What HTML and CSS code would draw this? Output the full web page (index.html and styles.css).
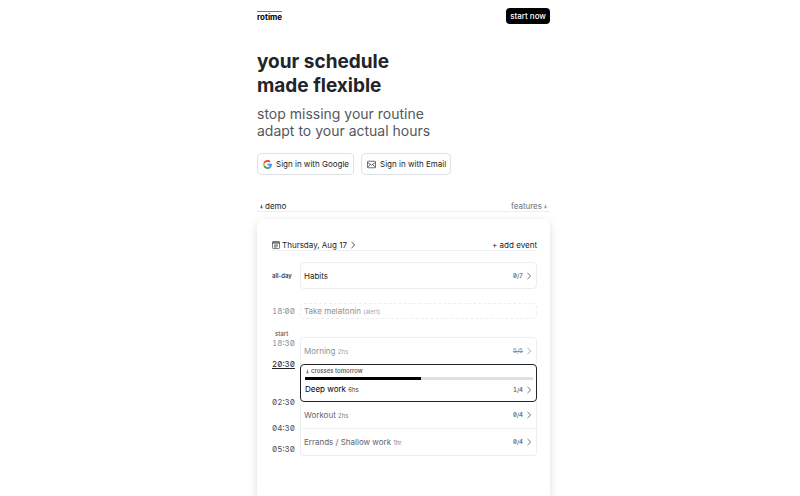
FILE: index.html
```
<!doctype html>
<html lang="en">
<head>
  <meta charset="UTF-8" />
  <title>rotime</title>
  <meta name="viewport" content="width=device-width, initial-scale=1">
  <link rel="stylesheet" href="styles.css">
</head>
<body>
  <svg class="defs" aria-hidden="true">
    <symbol id="chevron" viewBox="0 0 8 8">
      <path d="M2.5 1 5.7 4 2.5 7" fill="none" stroke="currentColor" stroke-width="0.8" />
    </symbol>
    <symbol id="arrow-down" viewBox="0 0 6 6">
      <path d="M3 .8V5M1.3 3.3 3 5 4.7 3.3" fill="none" stroke="currentColor" stroke-width="0.8" />
    </symbol>
  </svg>
  <div class="page">
    <header>
      <a class="logo" href="#">rotime</a>
      <button class="start">start now</button>
    </header>

    <section class="hero">
      <h1>your schedule<br>made flexible</h1>
      <p>stop missing your routine<br>adapt to your actual hours</p>
      <div class="signin">
        <button>
          <svg class="icon" viewBox="0 0 48 48">
            <path fill="#EA4335" d="M24 9.5c3.5 0 6.7 1.2 9.2 3.6l6.9-6.9C35.9 2.4 30.5 0 24 0 14.6 0 6.5 5.4 2.6 13.2l8 6.2C12.4 13.7 17.7 9.5 24 9.5z" />
            <path fill="#4285F4" d="M47 24.5c0-1.6-.2-3.1-.4-4.5H24v9h12.9c-.6 3-2.2 5.5-4.7 7.2l7.7 6C44.4 38 47 32 47 24.5z" />
            <path fill="#FBBC05" d="M10.5 28.6c-.5-1.5-.8-3-.8-4.6s.3-3.1.8-4.6l-8-6.2C.9 16.5 0 20.1 0 24s.9 7.5 2.6 10.8z" />
            <path fill="#34A853" d="M24 48c6.5 0 11.9-2.1 15.9-5.8l-7.7-6c-2.2 1.5-4.9 2.3-8.2 2.3-6.3 0-11.6-4.2-13.5-9.9l-8 6.2C6.5 42.6 14.6 48 24 48z" />
          </svg>
          Sign in with Google
        </button>
        <button>
          <svg class="icon" viewBox="0 0 16 16" fill="none" stroke="currentColor" stroke-width="1.2">
            <rect x=".8" y="2.2" width="14.4" height="11.6" rx="1.5" />
            <path d="M1 4.5 8 9l7-4.5M1 12.8 6.2 8M15 12.8 9.8 8" />
          </svg>
          Sign in with Email
        </button>
      </div>
    </section>

    <nav>
      <a class="current" href="#demo"><svg class="arrow"><use href="#arrow-down" /></svg>demo</a>
      <a href="#features">features<svg class="arrow"><use href="#arrow-down" /></svg></a>
    </nav>

    <main id="demo">
      <div class="toolbar">
        <button class="date">
          <svg class="calendar" viewBox="0 0 16 16" fill="none" stroke="currentColor" stroke-width="1.2">
            <rect x="1" y="1" width="14" height="14" rx="1.5" />
            <path d="M1 2.8h14M1 4.5h14M4 8h8M4 10.2h8M4 12.4h5" />
          </svg>
          Thursday, Aug 17
          <svg class="chevron"><use href="#chevron" /></svg>
        </button>
        <button>+ add event</button>
      </div>

      <div class="row all-day">
        <span class="label">all-day</span>
        <a class="event" href="#habits">
          <span>Habits</span>
          <span class="count">0/7<svg class="chevron"><use href="#chevron" /></svg></span>
        </a>
      </div>

      <div class="row alert">
        <time>18:00</time>
        <a class="event" href="#melatonin"><span>Take melatonin <small>(alert)</small></span></a>
      </div>

      <div class="row schedule">
        <ul class="times">
          <li class="one past"><small>start</small><time>18:30</time></li>
          <li class="three now"><time>20:30</time></li>
          <li class="two"><time>02:30</time></li>
          <li class="one"><time>04:30</time></li>
          <li><time>05:30</time></li>
        </ul>
        <div class="events">
          <a class="event past" href="#morning">
            <span>Morning <small>2hs</small></span>
            <span class="count"><s>5/5</s><svg class="chevron"><use href="#chevron" /></svg></span>
          </a>
          <a class="event active" href="#deep-work">
            <span class="note"><svg class="arrow"><use href="#arrow-down" /></svg>crosses tomorrow</span>
            <span class="bar"><span class="fill" style="width: 51%"></span></span>
            <span class="line">
              <span>Deep work <small>6hs</small></span>
              <span class="count">1/4<svg class="chevron"><use href="#chevron" /></svg></span>
            </span>
          </a>
          <a class="event" href="#workout">
            <span>Workout <small>2hs</small></span>
            <span class="count">0/4<svg class="chevron"><use href="#chevron" /></svg></span>
          </a>
          <a class="event last" href="#errands">
            <span>Errands / Shallow work <small>1hr</small></span>
            <span class="count">0/4<svg class="chevron"><use href="#chevron" /></svg></span>
          </a>
        </div>
      </div>
    </main>
  </div>
</body>
</html>
```

FILE: styles.css
```
* {
  box-sizing: border-box;
}
body {
  margin: 0;
  padding: 0 8px 0 15px;
  background: #fff;
  color: #212529;
  font-family: Inter, sans-serif;
  font-size: 8px;
  line-height: 10px;
}
a {
  color: inherit;
  text-decoration: none;
}
button {
  padding: 0;
  border: 0;
  background: none;
  color: inherit;
  font: inherit;
  cursor: pointer;
}
svg {
  flex: none;
}
.defs {
  position: absolute;
  width: 0;
  height: 0;
}
.page {
  display: flex;
  flex-direction: column;
  max-width: 293px;
  min-height: 100vh;
  margin: 0 auto;
}
header {
  display: flex;
  justify-content: space-between;
  align-items: center;
  padding-top: 8px;
}
.logo {
  border-top: 1px solid #777;
  color: #000;
  font-weight: 700;
}
.start {
  padding: 3px 4px;
  border-radius: 4px;
  background: #000;
  color: #fff;
  font-weight: 500;
}
h1 {
  margin: 26px 0 7px;
  font-size: 19px;
  line-height: 24px;
  font-weight: 700;
}
.hero p {
  margin: 0 0 14px;
  color: #54585c;
  font-size: 14px;
  line-height: 17px;
}
.signin {
  display: flex;
  gap: 7px;
}
.signin button {
  display: flex;
  align-items: center;
  gap: 4px;
  padding: 5px 4px 5px 5px;
  border: 1px solid #dee2e6;
  border-radius: 4px;
}
.icon {
  width: 9px;
  height: 9px;
}
nav {
  display: flex;
  justify-content: space-between;
  margin-top: 26px;
  padding: 0 2px;
  border-bottom: 1px solid #eceef0;
  color: #6c757d;
}
nav a {
  display: flex;
  align-items: center;
  gap: 1px;
}
nav .current {
  color: #212529;
}
.arrow {
  width: 5px;
  height: 5px;
}
main {
  flex: 1;
  margin-top: 7px;
  padding: 21px 13px 20px 15px;
  border-radius: 8px 8px 0 0;
  box-shadow: 0 3px 10px rgba(0, 0, 0, 0.14);
}
.toolbar {
  display: flex;
  justify-content: space-between;
  border-bottom: 1px solid #eceef0;
}
.date {
  display: flex;
  align-items: center;
  gap: 2px;
}
.calendar, .chevron {
  width: 8px;
  height: 8px;
}
.row {
  display: grid;
  grid-template-columns: 22px 1fr;
  column-gap: 6px;
}
.all-day, .alert {
  align-items: center;
}
.all-day {
  margin-top: 11px;
}
.label {
  font-size: 6px;
  font-weight: 500;
  white-space: nowrap;
}
time {
  display: block;
  color: #495057;
  font-feature-settings: "tnum", "zero";
}
small {
  font-size: 6px;
  opacity: 0.8;
}
.event {
  display: flex;
  justify-content: space-between;
  align-items: center;
  height: 27px;
  padding: 0 3px;
  border: 1px solid #eceef0;
  border-radius: 4px;
}
.count {
  display: flex;
  align-items: center;
  gap: 2px;
  color: #495057;
  font-size: 6px;
  font-weight: 500;
  font-feature-settings: "tnum", "zero";
}
.alert {
  margin-top: 14px;
}
.alert .event {
  height: 16px;
  border-style: dashed;
}
.alert time, .alert .event {
  color: #8b9095;
}
.schedule {
  margin-top: 10px;
}
.times {
  margin: 0;
  padding: 0;
  list-style: none;
}
.times small {
  display: block;
  height: 9px;
  padding-left: 3px;
  font-weight: 500;
}
/* one step per block on the right, 10px for the first label */
.one {
  height: 21px;
}
.two {
  height: 26px;
}
.three {
  height: 38px;
}
.times .past {
  height: 30px;
}
.past time, .past .count {
  color: #8b9095;
}
.now time {
  color: #212529;
  text-decoration: underline;
}
.events {
  padding-top: 8px;
}
.events .event {
  color: #5f656b;
}
.events .past {
  border-bottom: 0;
  border-radius: 4px 4px 0 0;
  color: #8b9095;
}
.events .active {
  flex-direction: column;
  align-items: stretch;
  justify-content: flex-start;
  height: 38px;
  padding: 1px 3px 3px 4px;
  border-color: #212529;
  color: #000;
}
.note {
  display: flex;
  align-items: center;
  gap: 1px;
  font-size: 6px;
  font-weight: 500;
  color: #495057;
}
.bar {
  height: 3px;
  margin: 1px 0 4px;
  background: #dee0e2;
}
.fill {
  display: block;
  height: 100%;
  background: #000;
}
.line {
  display: flex;
  justify-content: space-between;
}
.events .active + .event {
  border-top: 0;
  border-radius: 0;
}
.events .last {
  border-top: 0;
  border-radius: 0 0 4px 4px;
}
```
